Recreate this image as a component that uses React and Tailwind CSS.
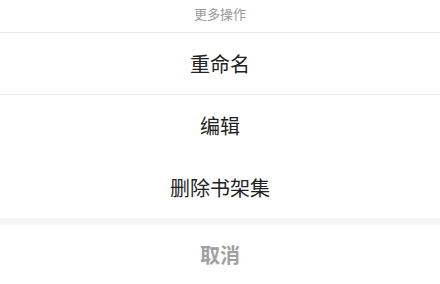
import React from "react";

const actions = ["重命名", "编辑", "删除书架集"];

export default function App() {
  return (
    <div
      className="w-[440px] h-[284px] overflow-hidden bg-white"
      style={{ fontFamily: '"Noto Sans CJK SC", "Noto Sans", sans-serif' }}
    >
      {/* header */}
      <div className="h-[33px] pb-[6px] flex items-center justify-center border-b border-[#e8e8e8] text-[13px] text-[#999999] leading-none">
        更多操作
      </div>

      <div className="h-[62px] flex items-center justify-center border-b border-[#e8e8e8] text-[20px] text-[#222222] leading-none">
        {actions[0]}
      </div>
      <div className="h-[62px] flex items-center justify-center text-[20px] text-[#222222] leading-none">
        {actions[1]}
      </div>
      <div className="h-[61px] flex items-center justify-center text-[20px] text-[#222222] leading-none">
        {actions[2]}
      </div>

      <div className="h-[7px] bg-[#f5f5f7]"></div>

      <div className="h-[60px] flex items-center justify-center text-[20px] font-bold text-[#a0a0a0] leading-none">
        取消
      </div>
    </div>
  );
}
